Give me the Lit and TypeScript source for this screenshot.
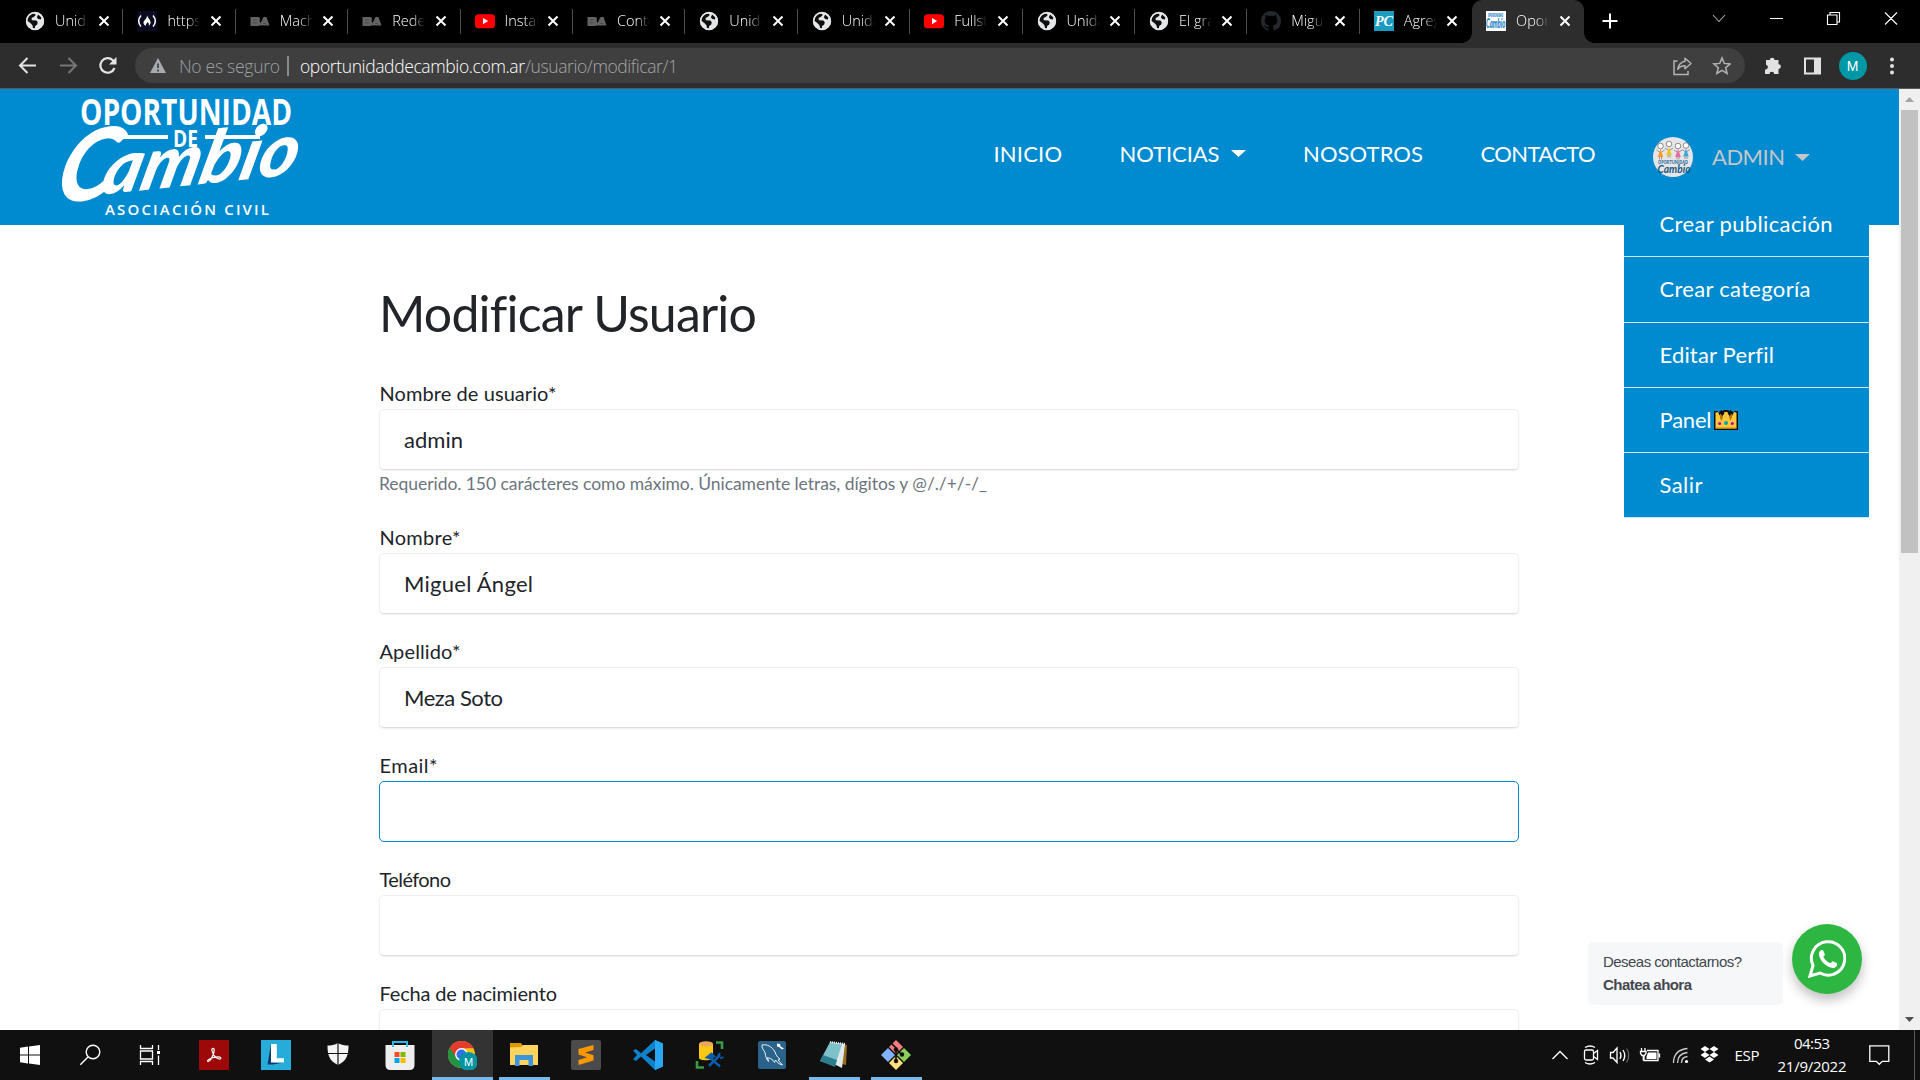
import { LitElement, html, css, svg, nothing } from "lit";
import { customElement, property } from "lit/decorators.js";

/* Sets its text to a given width by spreading the letters evenly. */
@customElement("fit-text")
class FitText extends LitElement {
  @property({ type: Number }) w = 0;
  @property() text = "";
  static styles = css`
    :host { display: inline-block; white-space: pre; }
    .t { display: inline-block; }
  `;
  updated() {
    const s = this.renderRoot.querySelector(".t") as HTMLElement;
    s.style.letterSpacing = "0px";
    const n = Math.max(1, this.text.length - 1);
    const ls = (this.w - s.getBoundingClientRect().width) / n;
    s.style.letterSpacing = ls + "px";
    s.style.marginRight = -ls + "px";
  }
  render() {
    return html`<span class="t">${this.text}</span>`;
  }
}

const fit = (text: string, w: number) => html`<fit-text .text=${text} .w=${w}></fit-text>`;

const globe = html`<svg width="20" height="20" viewBox="0 0 20 20"><circle cx="10" cy="10" r="9" fill="#e4e6e8"/><path d="M3.2 5.5C5 3.2 7.5 2.4 9.3 2.6L10.8 4 9 5.8 6.6 7l.2 2.2 4.6.2 1.4 1.8-.6 2.3-2 1.4-.4 2.4-1.8.2-.4-3-2-2.2-3.6-2.8Z" fill="#101010"/><path d="M13.2 3.6l3.2 3-.6 1.8-2.6-.4-1.4-1.8Z" fill="#101010"/><circle cx="10" cy="10" r="8.4" fill="none" stroke="#e4e6e8" stroke-width="1.6"/></svg>`;
const youtube = html`<svg width="20" height="20" viewBox="0 0 20 20"><rect y="3.2" width="20" height="14" rx="3.5" fill="#f00"/><path d="M8 7l5.2 3.1L8 13.2Z" fill="#fff"/></svg>`;
const ba = html`<svg width="20" height="20" viewBox="0 0 20 20"><path d="M.5 6h7.300q2.200 0 2.200 2L9.600 10l.9 2L13.500 6h3l3 8.400H9.300Q9 15 7.200 15H.5Z" fill="#636363"/><path d="M3 8.800h3.500M3 11.800h3.500M13 12.500h3" stroke="#454545" stroke-width=".8"/></svg>`;
const fcc = html`<svg width="20" height="20" viewBox="0 0 20 20"><rect width="20" height="20" fill="#0a0a23"/><path d="M4 4.500Q-.6 10 4 15.500M16 4.500Q20.600 10 16 15.500" fill="none" stroke="#fff" stroke-width="1.500"/><path d="M10 4c.4 2.600 3.600 4.600 3.600 7.600 0 1.600-.9 2.700-2 3.300.7-1.500.3-2.700-1-3.900-.4 1.300-2.300 2-1.600 3.900-1.500-.5-2.500-1.700-2.500-3.100C6.500 9.200 10.400 7.800 10 4Z" fill="#fff"/></svg>`;
const github = html`<svg width="20" height="20" viewBox="0 0 16 16"><path fill="#24292f" d="M8 0C3.580 0 0 3.580 0 8c0 3.540 2.290 6.530 5.470 7.590.4.070.55-.17.55-.38v-1.490c-2.010.37-2.530-.49-2.690-.94-.09-.23-.48-.94-.82-1.130-.28-.15-.68-.52-.01-.53.63-.01 1.080.58 1.230.82.72 1.210 1.870.87 2.330.66.070-.52.28-.87.51-1.070-1.780-.2-3.640-.89-3.640-3.950 0-.87.31-1.590.82-2.150-.08-.2-.36-1.020.08-2.120 0 0 .67-.21 2.200.82A7.600 7.600 0 0 1 8 3.860c.68 0 1.360.09 2 .27 1.530-1.040 2.200-.82 2.200-.82.44 1.100.16 1.920.08 2.120.51.56.82 1.270.82 2.150 0 3.070-1.870 3.750-3.650 3.950.29.25.54.73.54 1.480v2.200c0 .21.15.46.55.38A8 8 0 0 0 16 8c0-4.420-3.580-8-8-8Z"/></svg>`;
const pc = html`<svg width="20" height="20" viewBox="0 0 20 20"><rect width="20" height="20" fill="#1a9bbf"/><text x="1" y="15" font-family="Liberation Serif" font-weight="700" font-style="italic" font-size="15" fill="#fff" textLength="18" lengthAdjust="spacingAndGlyphs">PC</text></svg>`;
const opo = html`<svg width="20" height="20" viewBox="0 0 20 20"><rect width="20" height="20" fill="#fff"/><text x="2" y="5.500" font-family="Open Sans" font-weight="800" font-size="5" fill="#1c83c6" textLength="15" lengthAdjust="spacingAndGlyphs">OPORTUNIDAD</text><text x="0" y="16.500" font-family="Lato" font-weight="900" font-style="italic" font-size="13" fill="#1c83c6" textLength="19.500" lengthAdjust="spacingAndGlyphs">Cambio</text></svg>`;
const cross = html`<svg class="x" width="12" height="12" viewBox="0 0 12 12"><path d="M1.500 1.500l9 9M10.500 1.500l-9 9" stroke="#fff" stroke-width="2"/></svg>`;

const TABS: [unknown, string][] = [
  [globe, "Unidad"], [fcc, "https:"], [ba, "Machi"], [ba, "Redes"], [youtube, "Instala"],
  [ba, "Conte"], [globe, "Unidad"], [globe, "Unidad"], [youtube, "Fullsta"], [globe, "Unidad"],
  [globe, "El gra"], [github, "Miguel"], [pc, "Agreg"], [opo, "Oport"],
];

@customElement("browser-chrome")
class BrowserChrome extends LitElement {
  static styles = css`
    :host { display: block; height: 89px; background: #2d2d2d; font-family: "Open Sans", "Noto Sans", sans-serif; box-sizing: border-box; border-bottom: 1px solid #5b5b5b; }
    svg { display: block; flex: none; }
    .strip { height: 43px; background: #000; display: flex; padding-left: 11px; }
    .tab { width: 112.400px; box-sizing: border-box; height: 42px; display: flex; align-items: center; padding-left: 14px; position: relative; }
    .tab::after { content: ""; position: absolute; right: 0; top: 9px; height: 25px; width: 1px; background: #4d4d4d; }
    .tab.noline::after { display: none; }
    .tab.on { background: #2d2d2d; border-radius: 10px 10px 0 0; box-shadow: 0 1px 0 #2d2d2d; }
    .tab.on::before { content: ""; position: absolute; bottom: -1px; left: -10px; right: -10px; height: 10px;
      background: radial-gradient(circle at 0 0, transparent 9.500px, #2d2d2d 10px) left / 10px 10px no-repeat, radial-gradient(circle at 100% 0, transparent 9.500px, #2d2d2d 10px) right / 10px 10px no-repeat; }
    .name { width: 33px; margin-left: 10px; overflow: hidden; white-space: nowrap; color: #fff; font-size: 14.500px; font-weight: 300; line-height: 24px;
      -webkit-mask-image: linear-gradient(90deg, #000 60%, transparent); mask-image: linear-gradient(90deg, #000 60%, transparent); }
    .x { margin-left: 9.500px; }
    .plus { margin: 13px 0 0 18px; }
    .win { margin: 8px 22px 0 auto; }
    .bar { height: 45px; display: flex; align-items: center; padding: 0 0 1px 18px; }
    .omni { margin-left: 17px; width: 1609.500px; flex: none; height: 35px; border-radius: 18px; background: #3f3f3f; display: flex; align-items: center; box-sizing: border-box; padding: 0 14px 0 15px; font-size: 17.500px; font-weight: 300; color: #9aa0a6; line-height: 34px; }
    .sec { margin-left: 13px; }
    .sep { width: 1.500px; height: 20px; background: #8b8b8b; margin: 0 11px 0 7.500px; }
    .host { color: #fff; }
    .path { color: #a4a6a8; flex: 1; }
    .ext { margin-left: 18px; }
    .me { width: 28px; height: 28px; border-radius: 50%; background: #0097a7; color: #fff; text-align: center; font: 14px/28px "Liberation Sans", sans-serif; margin: 0 20px 0 17px; }
  `;
  render() {
    return html`
      <div class="strip">
        ${TABS.map(([icon, name], i) => html`<div class="tab ${i === 13 ? "on noline" : i === 12 ? "noline" : ""}">${icon}<span class="name">${name}</span>${cross}</div>`)}
        <svg class="plus" width="16" height="16" viewBox="0 0 16 16"><path d="M8 .5v15M.5 8h15" stroke="#fff" stroke-width="2"/></svg>
        <svg class="win" width="186" height="22" viewBox="0 0 186 22" fill="none" stroke="#fff" stroke-width="1.100"><path d="M1 7l6 6.500 6-6.500" stroke="#aaa"/><path d="M58 10.500h13M115.500 7h9.500v9.500h-9.500ZM118 7V4.500h9.500V14H125M173 4.500l12 12M185 4.500l-12 12"/></svg>
      </div>
      <div class="bar">
        <svg width="100" height="20" viewBox="0 0 100 20" fill="none" stroke-width="2"><path d="M18 9.500H2.500M9.500 2L2 9.500 9.500 17" stroke="#e4e4e4"/><path d="M42 9.500h15.500M50.500 2L58 9.500 50.500 17" stroke="#777"/><path d="M96.500 12A7.300 7.300 0 1 1 94.800 4.200L97 6.500" stroke="#e4e4e4" stroke-width="2.200"/><path d="M98.500 1V8.500H91Z" fill="#e4e4e4"/></svg>
        <div class="omni">
          <svg width="16" height="15" viewBox="0 0 16 15"><path d="M8 0l8 15H0Z" fill="#a7abaf"/><path d="M8 5.500v4.500M8 11.500v2" stroke="#3f3f3f" stroke-width="1.700"/></svg>
          <span class="sec">${fit("No es seguro", 101)}</span><span class="sep"></span>
          <span class="host">${fit("oportunidaddecambio.com.ar", 225)}</span><span class="path">${fit("/usuario/modificar/1", 153)}</span>
          <svg width="58" height="20" viewBox="0 0 58 20" fill="none" stroke="#b4b4b4" stroke-width="1.500"><path d="M4.500 5H1v13.500h14V15"/><path d="M12 2.200l6 5.300-6 5.300V9.800C8.500 9.800 6.500 11 4.800 13.300 5.500 9 8 6 12 5.300Z" stroke-linejoin="round"/><path d="M49 2l2.300 5.400 5.900.5-4.500 3.800 1.400 5.700L49 14.400l-5.100 3 1.400-5.700-4.500-3.800 5.900-.5Z"/></svg>
        </div>
        <svg class="ext" width="59" height="20" viewBox="0 0 59 20"><path d="M3 4h3.900a2.300 2.300 0 0 1 4.600 0H15.500v4.200a2.400 2.400 0 0 1 0 4.800v5h-4.400a2.300 2.300 0 0 0-4.600 0H2v-4.600a2.300 2.300 0 0 0 1-4.600Z" fill="#e2e2e2"/><path d="M42 2.500h15v15H42Z" fill="none" stroke="#e2e2e2" stroke-width="2"/><path d="M51 2h6v16h-6Z" fill="#e2e2e2"/></svg>
        <div class="me">M</div>
        <svg width="10" height="20" viewBox="0 0 10 20" fill="#e2e2e2"><circle cx="5" cy="3.500" r="2"/><circle cx="5" cy="10" r="2"/><circle cx="5" cy="16.500" r="2"/></svg>
      </div>`;
  }
}

@customElement("site-logo")
class SiteLogo extends LitElement {
  static styles = css`:host, svg { display: block; }`;
  render() {
    return html`<svg width="330" height="136" viewBox="0 89 330 136" fill="#fff">
      <text x="80" y="125" font-family="Open Sans" font-weight="700" font-size="36.500" textLength="212" lengthAdjust="spacingAndGlyphs">OPORTUNIDAD</text>
      <text x="173" y="146.500" font-family="Open Sans" font-weight="700" font-size="24" textLength="25" lengthAdjust="spacingAndGlyphs">DE</text>
      <path d="M119 135h49v4h-49ZM205 135h55v4h-55Z"/>
      <g transform="translate(60 204) rotate(-6) skewX(-20)" font-family="Lato" font-style="italic" font-weight="900">
        <text x="-8" y="-1" font-size="97" textLength="58" lengthAdjust="spacingAndGlyphs">C</text>
        <text x="38" y="-5" font-size="72" textLength="196" lengthAdjust="spacingAndGlyphs">ambio</text>
      </g>
      <text x="105" y="215" font-family="Open Sans" font-weight="600" font-size="15" textLength="164">ASOCIACIÓN CIVIL</text>
    </svg>`;
  }
}

const caret = html`<svg class="caret" width="15" height="7" viewBox="0 0 15 7"><path d="M0 0h15L7.500 7Z" fill="currentColor"/></svg>`;
const crown = html`<svg width="24" height="20" viewBox="0 0 24 20"><path d="M0 1h3l3 2 4-3h4l4 3 3-2h3v19H0Z" fill="#111"/><path d="M1.500 2.500L4 2l3 6 3.500-6h3L17 8l3-6 2.500.5v16h-21Z" fill="#ffc83d"/><path d="M6 4h3v3l-1.500 4L6 8ZM15 4h3v3l-1.500 4L15 7Z" fill="#b87606"/><path d="M7.500 0l3 3-2 3L5 2ZM16.500 0l-3 3 2 3L19 2Z" fill="#111"/><circle cx="12" cy="13" r="2" fill="#00a6a6"/><circle cx="5.700" cy="13.500" r="1.500" fill="#b4009e"/><circle cx="18.300" cy="13.500" r="1.500" fill="#b4009e"/><path d="M1.500 17.500h21v1h-21Z" fill="#e08a00"/></svg>`;
const KIDS: [string, number, number][] = [["#f59a23", 7.5, 9], ["#f2c619", 16, 7], ["#f0679e", 25, 9], ["#3da7dd", 33, 8.5]];
const avatar = html`<svg class="avatar" width="40" height="40" viewBox="0 0 40 40"><circle cx="20" cy="20" r="20" fill="#e6e6ea"/>
  ${KIDS.map(([c, x, y]) => svg`<circle cx=${x} cy=${y} r="2.800" fill="#fff" stroke="#77706a" stroke-width=".8"/><path d=${`M${x} ${y + 3}l2.800 8h-5.600Z`} fill=${c}/><path d=${`M${x - 1} ${y + 11}v2.500M${x + 1} ${y + 11}v2.500M${x - 4} ${y + 4}l3 2M${x + 4} ${y + 4}l-3 2`} stroke="#77706a" stroke-width=".7"/>`)}
  <text x="5" y="26.500" font-family="Open Sans" font-weight="700" font-size="5.500" fill="#2b6f9e" textLength="30" lengthAdjust="spacingAndGlyphs">OPORTUNIDAD</text>
  <text x="4.500" y="36" font-family="Lato" font-weight="700" font-style="italic" font-size="11" fill="#17567a" textLength="33" lengthAdjust="spacingAndGlyphs">Cambio</text></svg>`;

const MENU: [string, number][] = [["Crear publicación", 173], ["Crear categoría", 151], ["Editar Perfil", 114], ["Panel", 52], ["Salir", 43]];

@customElement("site-header")
class SiteHeader extends LitElement {
  static styles = css`
    :host { display: block; position: relative; font-family: Lato, sans-serif; color: #fff; font-size: 22px; }
    .bar { height: 136px; background: #008acf; display: flex; justify-content: space-between; align-items: center; }
    svg { display: block; }
    nav { display: flex; align-items: center; gap: 57.500px; padding-right: 89px; line-height: 30px; }
    .link { display: flex; align-items: center; gap: 11px; margin-bottom: 7px; }
    .user { display: flex; align-items: center; color: #c3c7ca; }
    .user .nm { margin: 0 10px 0 19px; }
    .menu { position: absolute; left: 1624px; top: 103px; width: 245px; background: #008acf; }
    .item { height: 65.250px; box-sizing: border-box; border-bottom: 1px solid #cfe6f4; padding-left: 35.500px; display: flex; align-items: center; gap: 3px; line-height: 64px; }
  `;
  render() {
    return html`
      <div class="bar">
        <site-logo></site-logo>
        <nav>
          <span class="link">${fit("INICIO", 68.5)}</span>
          <span class="link">${fit("NOTICIAS", 100)}${caret}</span>
          <span class="link">${fit("NOSOTROS", 120)}</span>
          <span class="link">${fit("CONTACTO", 115)}</span>
          <span class="user">${avatar}<span class="nm">${fit("ADMIN", 73)}</span>${caret}</span>
        </nav>
      </div>
      <div class="menu">
        ${MENU.map(([t, w]) => html`<div class="item">${fit(t, w)}${t === "Panel" ? crown : nothing}</div>`)}
      </div>`;
  }
}

interface Field { label: string; lw: number; value?: string; vw?: number; help?: string; hw?: number; focus?: boolean; }
const FIELDS: Field[] = [
  { label: "Nombre de usuario*", lw: 177, value: "admin", vw: 59, help: "Requerido. 150 carácteres como máximo. Únicamente letras, dígitos y @/./+/-/_", hw: 608 },
  { label: "Nombre*", lw: 81, value: "Miguel Ángel", vw: 129 },
  { label: "Apellido*", lw: 81, value: "Meza Soto", vw: 99 },
  { label: "Email*", lw: 58, focus: true },
  { label: "Teléfono", lw: 71.5 },
  { label: "Fecha de nacimiento", lw: 177.5 },
];

@customElement("user-form")
class UserForm extends LitElement {
  static styles = css`
    :host { display: block; width: 1140px; margin-left: 379px; padding-top: 58px; font-family: Lato, sans-serif; color: #212529; }
    h1 { margin: 0 0 35px; font-weight: 400; font-size: 50px; line-height: 60px; }
    .group { margin-bottom: 22px; }
    .label { font-size: 20px; line-height: 30px; height: 31px; display: block; padding-left: .5px; }
    .input { height: 61px; box-sizing: border-box; border-radius: 5px; padding-left: 24px; font-size: 22px; line-height: 59px; border: 1px solid #efefef; border-bottom-color: #dcdddf; box-shadow: 0 1px 2px rgba(0, 0, 0, .07); background: #fff; }
    .input.focus { border-color: #008acf; box-shadow: none; }
    .help { height: 30px; line-height: 28px; font-size: 17.500px; color: #6c757d; }
  `;
  render() {
    return html`<h1>${fit("Modificar Usuario", 377)}</h1>
      ${FIELDS.map((f) => html`<div class="group">
        <span class="label">${fit(f.label, f.lw)}</span>
        <div class="input ${f.focus ? "focus" : ""}">${f.value ? fit(f.value, f.vw!) : nothing}</div>
        ${f.help ? html`<div class="help">${fit(f.help, f.hw!)}</div>` : nothing}
      </div>`)}`;
  }
}

@customElement("chat-float")
class ChatFloat extends LitElement {
  static styles = css`
    :host { display: flex; align-items: flex-end; gap: 9px; font: 15px/23px "Liberation Sans", sans-serif; color: #43474e; }
    .box { width: 195px; height: 63px; box-sizing: border-box; background: #f5f7f9; border-radius: 5px; padding: 8px 0 0 15px; margin-bottom: -11px; }
    .b { font-weight: 700; display: block; }
    .a { display: block; }
    .btn { width: 70px; height: 70px; border-radius: 50%; background: #2db742; box-shadow: 0 6px 12px rgba(0, 0, 0, .25); display: grid; place-items: center; }
  `;
  render() {
    return html`<div class="box"><span class="a">${fit("Deseas contactarnos?", 139)}</span><span class="b">${fit("Chatea ahora", 89)}</span></div>
      <div class="btn"><svg width="38" height="38" viewBox="0 0 38 38"><path d="M2 36l3-10.500A16.700 16.700 0 1 1 12 33Z" fill="none" stroke="#fff" stroke-width="3"/><path d="M11 14c0-2.200 1.200-3.700 2.400-4 .9-.2 1.600 0 1.900.8l1.500 3.500c.3.700-.8 1.700-1.500 2.500 1.700 3.200 4 5.200 7.200 6.500.9-.8 1.600-2.200 2.400-2l3.700 1.800c.9.500.5 1.900.1 2.800-.8 1.500-3.300 2.400-5.200 1.900C17 26.200 11.200 19.600 11 14Z" fill="#fff"/></svg></div>`;
  }
}

const i30 = (c: unknown) => html`<svg width="30" height="30" viewBox="0 0 30 30">${c}</svg>`;
const SYS = [
  svg`<path d="M5 7.700l8-1.100V14.500H5ZM14 6.500L25 5v9.500H14ZM5 15.500h8v7.900l-8-1.100ZM14 15.500h11V25l-11-1.500Z" fill="#fff"/>`,
  svg`<g fill="none" stroke="#fff" stroke-width="1.400"><circle cx="18" cy="12" r="6.800"/><path d="M13.200 16.800L5.300 24.800"/></g>`,
  svg`<g fill="none" stroke="#fff" stroke-width="1.300"><path d="M5.500 5v3.500h12V5M5.500 11h12v8h-12ZM5.500 25v-3.500h12V25M23.500 5v5M23.500 15.500V25"/><path d="M22 11h3v3h-3Z" fill="#fff" stroke="none"/></g>`,
];
const APPS: { icon: unknown; cls?: string }[] = [
  { icon: svg`<rect width="30" height="30" fill="#9d0808"/><path d="M13.500 8.500c2-.8 2 1.500 1.200 4.500-1.200 4.500-4 8.500-5.400 8.500-2.200-.6 1-3 5-4 3.500-.8 7.500-1 7.500.6 0 2-4 .6-6.300-2.300-1.600-2.100-3.600-6.500-2-7.300Z" fill="none" stroke="#fff" stroke-width="1.200"/>` },
  { icon: svg`<rect width="30" height="30" fill="#25acd9"/><path d="M10 4L6.500 24.500h5L23 22.500H13Z" fill="#123b68"/><path d="M10 4h5.800v14.200H23v4.400H10Z" fill="#fff"/>` },
  { icon: svg`<path d="M15 3c3 2 7 2.600 10.500 2.600 0 9-1.500 15.400-10.500 19.400C6 21 4.500 14.600 4.500 5.600 8 5.600 12 5 15 3Z" fill="#f4f4f4"/><path d="M15 2.500v23M4 13.500h22" stroke="#101010" stroke-width="1.200"/>` },
  { icon: svg`<path d="M8 6V2h14v4" fill="none" stroke="#2ab7f1" stroke-width="2"/><path d="M.5 5h29v20q0 5-5 5h-19q-5 0-5-5Z" fill="#eee"/><path d="M9.500 12H14.500v5h-5Z" fill="#f25022"/><path d="M15.500 12h5v5h-5Z" fill="#7fba00"/><path d="M9.500 18h5v5h-5Z" fill="#00a4ef"/><path d="M15.500 18h5v5h-5Z" fill="#ffb900"/><path d="M8 7V2h14v5" fill="none" stroke="#2ab7f1" stroke-width="1.600"/>` },
  { cls: "run hot", icon: svg`<circle cx="14.500" cy="14.500" r="13.500" fill="#fbc116"/><path d="M14.500 14.500L2.800 7.700A13.500 13.500 0 0 0 14.500 28l5.300-10.200Z" fill="#229342"/><path d="M14.500 8.300H26.500A13.500 13.500 0 0 0 2.800 7.700L9.500 18Z" fill="#e33b2e"/><circle cx="14.500" cy="14.500" r="6.400" fill="#fff"/><circle cx="14.500" cy="14.500" r="5" fill="#2f73e8"/><circle cx="21.500" cy="21.500" r="9.500" fill="#0494a3"/><text x="21.500" y="25.500" text-anchor="middle" font-family="Liberation Sans" font-size="11" fill="#fff">M</text>` },
  { cls: "run", icon: svg`<path d="M1 3h11l2 3v5H1Z" fill="#dd9a00"/><path d="M1 7.500l11-.5 2-2h15v20H1Z" fill="#ffd35c"/><path d="M6 15h18v11h-4.500v-6h-9v6H6Z" fill="#3c95db"/>` },
  { icon: svg`<rect width="30" height="30" rx="2" fill="#4b4b4b"/><path d="M7.500 9l15-4v5l-8.500 2.500 8.500 2.700v5.300l-15 4.500v-5l8.500-2.700L7.500 14.500Z" fill="#ff9800"/>` },
  { icon: svg`<path d="M22 0l8 3.500v23L22 30 8 16.500 3 21 0 19.300V10.500L3 9l5 4.200Z" fill="#0f80cc"/><path d="M22 0l8 3.500v23L22 30Z" fill="#2aa7f2"/><path d="M22 8.500v13L13 15Z" fill="#101010"/><path d="M0 10.500L4 15l-4 4.300Z" fill="#101010"/>` },
  { icon: svg`<path d="M4 4v14c0 3 14 3 14 0V4Z" fill="#fdc914"/><ellipse cx="11" cy="4" rx="7" ry="2.700" fill="#eda75a"/><path d="M21 2.500h6v6.500M2 21v6.500h7" fill="none" stroke="#3d9943" stroke-width="2.600"/><path d="M14 26l11-11M14 17l11 9.500" stroke="#0b5cab" stroke-width="2.500"/><path d="M11.500 17.500l5-4 3 3-4 2ZM23 16l2-3M25 18.500l3.500-1.500" stroke="#0b5cab" stroke-width="1.800" fill="#0b5cab"/>` },
  { icon: svg`<rect x="1" y="1" width="28" height="28" rx="2" fill="#2a6389"/><path d="M5 5c5-1 10 1.500 13 7 1 3 2 5 5 7l-2 1 4.500 5-4-1.500-3-3.500-1 2.500c-2-4-5-4-7-5l1 4c-2-2-3-5-3.500-9C6.500 10 4.500 7.500 5 5Z" fill="none" stroke="#eaf3fa"/><path d="M20 3.500l3 .5.500 2.500L27 8.500l-2 1-3-2.500-2-.5Z" fill="#fff"/>` },
  { cls: "run", icon: svg`<path d="M24 4l4 1-1 20-4-1Z" fill="#9b6b1e"/><path d="M11 2l15 2-3 24-8-4Z" fill="#dfe8ea"/><path d="M11 2l12 2-7 22L1 21Z" fill="#7fc1ca"/><path d="M1 21l3-6 14 5-2 7Z" fill="#2d7d8d"/><path d="M11 2l15 2" stroke="#eee" stroke-width="2" stroke-dasharray="1 1"/>` },
  { cls: "run", icon: svg`<path d="M15 0l7 7-7 7-7-7Z" fill="#f57c7c"/><path d="M23 8l7 7-7 7-7-7Z" fill="#8cd05a"/><path d="M7 8l7 7-7 7-7-7Z" fill="#81b1ff"/><path d="M15 16l7 7-7 7-7-7Z" fill="#ffe17c"/><path d="M10.500 3.500L15 8v13.500M15 9l6 6" fill="none" stroke="#101010" stroke-width="1.700"/><circle cx="15" cy="9.500" r="2.200" fill="#101010"/><circle cx="15" cy="21" r="2.200" fill="#101010"/><circle cx="21" cy="14.500" r="2.200" fill="#101010"/>` },
];

@customElement("task-bar")
class TaskBar extends LitElement {
  static styles = css`
    :host { display: flex; height: 50px; background: #101010; font-family: "Open Sans", sans-serif; color: #fff; font-size: 15px; }
    svg { display: block; }
    .sys { width: 60px; display: grid; place-items: center; }
    .apps { display: flex; gap: 1px; padding-left: 3.500px; }
    .app { width: 61px; height: 50px; display: grid; place-items: center; position: relative; box-sizing: border-box; }
    .run::after { content: ""; position: absolute; bottom: 0; left: 5px; right: 5px; height: 3px; background: #76b9ed; }
    .hot { background: #333; }
    .hot::after { left: 0; right: 0; }
    .tray { margin-left: auto; display: flex; align-items: center; }
    .esp { margin-left: 15px; line-height: 20px; }
    .clock { width: 69px; margin: 0 22.500px 0 18px; text-align: center; line-height: 23px; }
    .edge { width: 1px; height: 50px; background: #5a5a5a; margin: 0 5px 0 24px; }
  `;
  render() {
    return html`
      ${SYS.map((s) => html`<div class="sys">${i30(s)}</div>`)}
      <div class="apps">${APPS.map((a) => html`<div class="app ${a.cls ?? ""}">${i30(a.icon)}</div>`)}</div>
      <div class="tray">
        <svg width="168" height="24" viewBox="1552 1043 168 24" fill="none" stroke="#fff" stroke-width="1.300">
          <path d="M1552.500 1059l7.500-7.500 7.500 7.500"/>
          <rect x="1584.500" y="1050" width="9" height="10" rx="1.500"/><path d="M1593.500 1053.500l4-3v9l-4-3M1585 1047.500q5-3 10 0M1585 1062.500q5 3 10 0"/>
          <path d="M1610.500 1052.500h2.500l4-4.500v14.500l-4-4.500h-2.500ZM1620 1052q2 3.500 0 7M1623 1050q3.500 5.500 0 11"/><path d="M1626.500 1048.500q4.500 6.500 0 14" stroke="#666"/>
          <path d="M1647 1050.500h11v10h-14v-4.500M1659.500 1053.500v4"/><path d="M1648 1052.500h8.500v6.500h-10v-2.500Z" fill="#fff" stroke="none"/><path d="M1641.500 1048v3M1645 1048v3M1640.500 1051.500h5.500v2l-1.500 2h-2.500l-1.500-2ZM1643.300 1055.500v5"/>
          <path d="M1673.500 1063q0-13 14-14.500M1677.500 1063q0-9.500 10-10.500M1681.500 1063q0-6 6-6.500" stroke="#ccc"/><circle cx="1686.500" cy="1061.500" r="1.600" fill="#fff" stroke="none"/>
          <path d="M1705 1046l4.500 3-4.500 3-4.500-3ZM1714 1046l4.500 3-4.500 3-4.500-3ZM1705 1052l4.500 3-4.500 3-4.500-3ZM1714 1052l4.500 3-4.500 3-4.500-3ZM1709.500 1056.500l4.500 3-4.500 3-4.500-3Z" fill="#fff" stroke="none"/>
        </svg>
        <span class="esp">${fit("ESP", 25)}</span>
        <div class="clock">${fit("04:53", 36)}<br>${fit("21/9/2022", 69)}</div>
        <svg width="21" height="22" viewBox="0 0 21 22"><path d="M.8 1.800h19v15.500h-6.500l-3 3-3-3H.8Z" fill="none" stroke="#fff" stroke-width="1.300"/></svg>
        <span class="edge"></span>
      </div>`;
  }
}

@customElement("app-root")
class AppRoot extends LitElement {
  static styles = css`
    :host { display: flex; flex-direction: column; width: 1920px; height: 1080px; overflow: hidden; background: #fff; }
    browser-chrome, task-bar { flex: none; }
    .view { flex: 1; min-height: 0; display: flex; position: relative; }
    .page { width: 1899px; overflow: hidden; }
    .scroll { width: 21px; background: #f0f0f0; display: flex; flex-direction: column; align-items: center; }
    .thumb { width: 17px; height: 443px; background: #c1c1c1; }
    .arr { height: 21px; width: 21px; flex: none; display: grid; place-items: center; }
    .arr.down { margin-top: auto; }
    chat-float { position: absolute; left: 1588px; top: 835px; }
  `;
  render() {
    return html`
      <browser-chrome></browser-chrome>
      <div class="view">
        <div class="page"><site-header></site-header><user-form></user-form></div>
        <div class="scroll">
          <div class="arr"><svg width="9" height="5" viewBox="0 0 9 5"><path d="M0 5h9L4.500 0Z" fill="#a3a3a3"/></svg></div>
          <div class="thumb"></div>
          <div class="arr down"><svg width="9" height="5" viewBox="0 0 9 5"><path d="M0 0h9L4.500 5Z" fill="#505050"/></svg></div>
        </div>
        <chat-float></chat-float>
      </div>
      <task-bar></task-bar>`;
  }
}
